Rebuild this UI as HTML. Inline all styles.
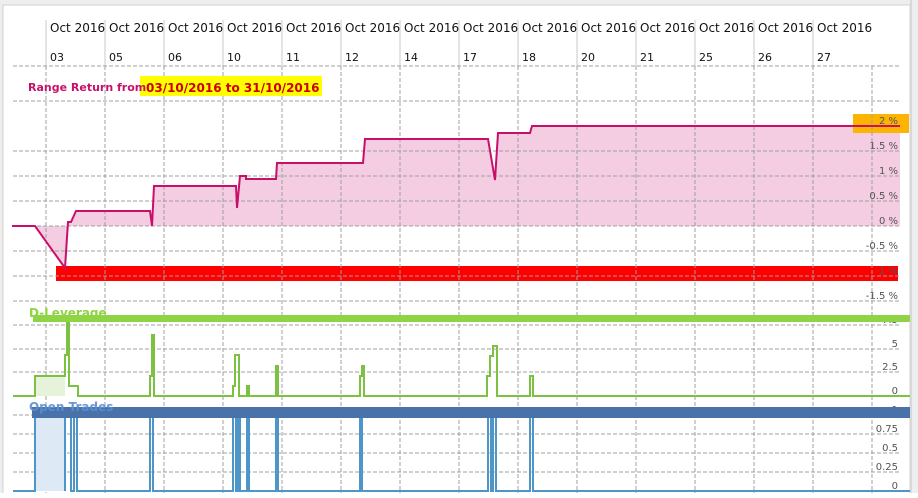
<!DOCTYPE html>
<html><head><style>
body{margin:0;background:#fff;width:918px;height:493px;overflow:hidden;font-family:"Liberation Sans",sans-serif}
</style></head><body>
<svg width="918" height="493" xmlns="http://www.w3.org/2000/svg" font-family="Liberation Sans, sans-serif">
<rect x="0" y="0" width="918" height="493" fill="#eeeeee"/>
<rect x="3" y="5" width="907" height="490" fill="#fff" stroke="#d0d0d0"/>
<line x1="911" y1="0" x2="911" y2="493" stroke="#d8d8d8" stroke-width="2"/>
<g font-size="12" fill="#111" font-family="DejaVu Sans, sans-serif">
<text x="50" y="32">Oct 2016</text><text x="109" y="32">Oct 2016</text><text x="168" y="32">Oct 2016</text><text x="227" y="32">Oct 2016</text><text x="286" y="32">Oct 2016</text><text x="345" y="32">Oct 2016</text><text x="404" y="32">Oct 2016</text><text x="463" y="32">Oct 2016</text><text x="522" y="32">Oct 2016</text><text x="581" y="32">Oct 2016</text><text x="640" y="32">Oct 2016</text><text x="699" y="32">Oct 2016</text><text x="758" y="32">Oct 2016</text><text x="817" y="32">Oct 2016</text>
</g>
<g font-size="11" fill="#111" font-family="DejaVu Sans, sans-serif">
<text x="50" y="61">03</text><text x="109" y="61">05</text><text x="168" y="61">06</text><text x="227" y="61">10</text><text x="286" y="61">11</text><text x="345" y="61">12</text><text x="404" y="61">14</text><text x="463" y="61">17</text><text x="522" y="61">18</text><text x="581" y="61">20</text><text x="640" y="61">21</text><text x="699" y="61">25</text><text x="758" y="61">26</text><text x="817" y="61">27</text>
</g>
<g stroke="#c8c8c8"><line x1="46" y1="20" x2="46" y2="66"/><line x1="105" y1="20" x2="105" y2="66"/><line x1="164" y1="20" x2="164" y2="66"/><line x1="223" y1="20" x2="223" y2="66"/><line x1="282" y1="20" x2="282" y2="66"/><line x1="341" y1="20" x2="341" y2="66"/><line x1="400" y1="20" x2="400" y2="66"/><line x1="459" y1="20" x2="459" y2="66"/><line x1="518" y1="20" x2="518" y2="66"/><line x1="577" y1="20" x2="577" y2="66"/><line x1="636" y1="20" x2="636" y2="66"/><line x1="695" y1="20" x2="695" y2="66"/><line x1="754" y1="20" x2="754" y2="66"/><line x1="813" y1="20" x2="813" y2="66"/></g>
<path d="M35,226 L65,268 L68,222 L71,222 L76,211 L150,211 L152,226 L154,186 L236,186 L237,208 L240,176 L246,176 L246,179 L276,179 L277,163 L363,163 L365,139 L488,139 L495,180 L498,133 L530,133 L532,126 L900,126 L900,226 Z" fill="#f4cde2"/>
<rect x="56" y="266" width="842" height="15" fill="#ff0000"/>
<rect x="853" y="114" width="56" height="19" fill="#fdb400"/>
<g stroke="#a0a0a0" stroke-dasharray="4,2">
<line x1="13" y1="66" x2="900" y2="66"/><line x1="13" y1="101" x2="900" y2="101"/><line x1="13" y1="151" x2="900" y2="151"/><line x1="13" y1="176" x2="900" y2="176"/><line x1="13" y1="201" x2="900" y2="201"/><line x1="13" y1="226" x2="900" y2="226"/><line x1="13" y1="251" x2="900" y2="251"/><line x1="13" y1="276" x2="900" y2="276"/><line x1="13" y1="301" x2="900" y2="301"/>
<line x1="13" y1="325" x2="900" y2="325"/><line x1="13" y1="349" x2="900" y2="349"/><line x1="13" y1="372" x2="900" y2="372"/>
<line x1="13" y1="415" x2="900" y2="415"/><line x1="13" y1="434" x2="900" y2="434"/><line x1="13" y1="453" x2="900" y2="453"/><line x1="13" y1="472" x2="900" y2="472"/>
<line x1="46" y1="66" x2="46" y2="493"/><line x1="105" y1="66" x2="105" y2="493"/><line x1="164" y1="66" x2="164" y2="493"/><line x1="223" y1="66" x2="223" y2="493"/><line x1="282" y1="66" x2="282" y2="493"/><line x1="341" y1="66" x2="341" y2="493"/><line x1="400" y1="66" x2="400" y2="493"/><line x1="459" y1="66" x2="459" y2="493"/><line x1="518" y1="66" x2="518" y2="493"/><line x1="577" y1="66" x2="577" y2="493"/><line x1="636" y1="66" x2="636" y2="493"/><line x1="695" y1="66" x2="695" y2="493"/><line x1="754" y1="66" x2="754" y2="493"/><line x1="813" y1="66" x2="813" y2="493"/><line x1="872" y1="66" x2="872" y2="493"/>
</g>
<path d="M12,226 L35,226 L65,268 L68,222 L71,222 L76,211 L150,211 L152,226 L154,186 L236,186 L237,208 L240,176 L246,176 L246,179 L276,179 L277,163 L363,163 L365,139 L488,139 L495,180 L498,133 L530,133 L532,126 L900,126" fill="none" stroke="#c8106a" stroke-width="2"/>
<rect x="140" y="76" width="182" height="20" fill="#ffff00"/>
<text x="28" y="91" font-size="11" font-weight="bold" fill="#c8106a" font-family="DejaVu Sans, sans-serif">Range Return from</text>
<text x="146" y="92" font-size="12" font-weight="bold" fill="#cc0000" font-family="DejaVu Sans, sans-serif">03/10/2016 to 31/10/2016</text>
<g font-size="10" fill="#555" text-anchor="end" font-family="DejaVu Sans, sans-serif">
<text x="898" y="124">2 %</text><text x="898" y="149">1.5 %</text><text x="898" y="174">1 %</text><text x="898" y="199">0.5 %</text><text x="898" y="224">0 %</text><text x="898" y="249">-0.5 %</text><text x="898" y="274">-1 %</text><text x="898" y="299">-1.5 %</text>
<text x="898" y="323">7.5</text><text x="898" y="347">5</text><text x="898" y="370">2.5</text><text x="898" y="394">0</text>
<text x="898" y="413">1</text><text x="898" y="432">0.75</text><text x="898" y="451">0.5</text><text x="898" y="470">0.25</text><text x="898" y="489">0</text>
</g>
<rect x="35" y="376" width="30" height="20" fill="#e6f2da"/>
<path d="M13,396 L35,396 L35,376 L65,376 L65,355 L67,355 L67,318 L69,318 L69,386 L78,386 L78,396 L150,396 L150,376 L152,376 L152,335 L154,335 L154,396 L233,396 L233,386 L235,386 L235,355 L239,355 L239,396 L247,396 L247,386 L249,386 L249,396 L276,396 L276,366 L278,366 L278,396 L360,396 L360,376 L362,376 L362,366 L364,366 L364,396 L487,396 L487,376 L490,376 L490,356 L493,356 L493,346 L497,346 L497,396 L530,396 L530,376 L533,376 L533,396 L910,396" fill="none" stroke="#7dc142" stroke-width="2"/>
<rect x="33" y="315" width="877" height="7" fill="#8fd444"/>
<text x="29" y="317" font-size="12" font-weight="bold" fill="#8fd444" font-family="DejaVu Sans, sans-serif">D-Leverage</text>
<rect x="35" y="415" width="30" height="76" fill="#dde9f4"/>
<path d="M13,491 L35,491 L35,415 L65,415 L65,491 M65,491 L65,415 L71,415 L71,491 L74,491 L74,415 L77,415 L77,491 L150,491 L150,415 L153,415 L153,491 L233,491 L233,415 L236,415 L236,491 L238,491 L238,415 L240,415 L240,491 L247,491 L247,415 L249,415 L249,491 L276,491 L276,415 L278,415 L278,491 L360,491 L360,415 L362,415 L362,491 L488,491 L488,415 L491,415 L491,491 L493,491 L493,415 L496,415 L496,491 L530,491 L530,415 L533,415 L533,491 L910,491" fill="none" stroke="#4e95c8" stroke-width="2"/>
<rect x="32" y="407" width="878" height="11" fill="#4a72aa"/>
<text x="29" y="411" font-size="12" font-weight="bold" fill="#5b8fcf" opacity="0.9" font-family="DejaVu Sans, sans-serif">Open Trades</text>
</svg>
</body></html>
